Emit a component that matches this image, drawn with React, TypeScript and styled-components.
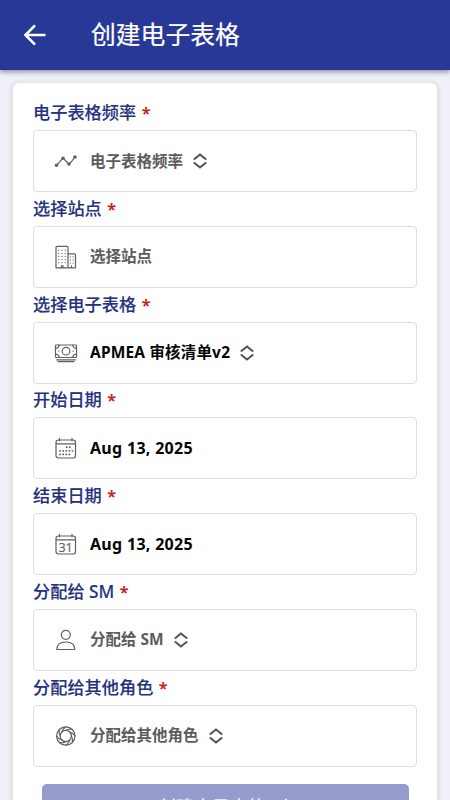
import React from "react";
import styled, { createGlobalStyle } from "styled-components";

const GlobalStyle = createGlobalStyle`
  * { box-sizing: border-box; }
  body {
    margin: 0;
    background: #f0f1f8;
    font-family: "Noto Sans", "Noto Sans CJK SC", sans-serif;
  }
`;

const Screen = styled.div`
  height: 800px;
  overflow: hidden;
`;

const Header = styled.header`
  position: relative;
  display: flex;
  align-items: center;
  height: 70px;
  padding-left: 22px;
  background: #273896;
  box-shadow: 0 2px 5px rgba(20, 20, 50, 0.45);
`;

const Title = styled.h1`
  margin: 0 0 4px 43px;
  color: #fff;
  font: 400 24.8px/36px "Noto Sans CJK SC", sans-serif;
  -webkit-text-stroke: 0.2px #fff;
`;

const Card = styled.main`
  height: 760px;
  margin: 12px 12px 0;
  padding: 13.2px 20px 0;
  background: #fff;
  border: 1px solid #e4e5ea;
  border-radius: 7px;
  box-shadow: 0 1px 5px rgba(40, 40, 70, 0.2);
`;

const Field = styled.section`
  height: 95.75px;
`;

const Label = styled.label`
  display: flex;
  align-items: center;
  height: 33.9px;
  color: #25317f;
  font-size: 17.2px;
  font-weight: 500;
  line-height: 26px;
  white-space: pre;
  -webkit-text-stroke: 0.12px currentColor;
`;

const Required = styled.span`
  margin-left: 5.5px;
  color: #d0161c;
  font-family: "Noto Sans", sans-serif;
  font-size: 16px;
  font-weight: 600;
`;

const Control = styled.div`
  display: flex;
  align-items: center;
  width: 384px;
  height: 62px;
  padding-left: 19px;
  border: 1px solid #d9dee8;
  border-radius: 4px;
`;

const Value = styled.span<{ $filled?: boolean; $tracking?: number }>`
  margin: 0 9px 1px 11px;
  color: ${(p) => (p.$filled ? "#050505" : "#5c5c5c")};
  font-size: ${(p) => (p.$tracking && p.$tracking > 0.2 ? 16 : 15.5)}px;
  font-weight: 700;
  line-height: 24px;
  letter-spacing: ${(p) => p.$tracking ?? 0}px;
  white-space: pre;
`;

const Submit = styled.button`
  display: flex;
  align-items: flex-start;
  justify-content: center;
  gap: 8px;
  width: 367px;
  height: 50px;
  margin: 17.8px 0 0 8.5px;
  padding: 9px 2px 0 0;
  border: 0;
  border-radius: 5px;
  background: #959bca;
  color: #eef0fb;
  font: 500 18px/27px "Noto Sans CJK SC", sans-serif;
`;

const Icon = styled.svg`
  display: block;
  flex: none;
  fill: none;
  stroke: #606060;
  stroke-width: 1.2;
  stroke-linecap: round;
  stroke-linejoin: round;
`;

const Small = ({ children }: { children: React.ReactNode }) => (
  <Icon width="26" height="26" viewBox="0 0 26 26">{children}</Icon>
);

const TrendIcon = () => (
  <Small>
    <g fill="#777">
      <path fill="none" d="M4.2 16.7 9 11.2M11 11l4.3 4.6M17 15.3 21.5 9.8" />
      <circle cx="3.5" cy="17.2" r="1.2" />
      <circle cx="10" cy="10.3" r="1.2" />
      <circle cx="16" cy="16" r="1.2" />
      <circle cx="22" cy="9" r="1.2" />
    </g>
  </Small>
);

const BuildingIcon = () => (
  <Small>
    <path d="M3 23.8V3.4q0-1 1-1h10q1 0 1 1v20.4zM15 9.8h6.5q1 0 1 1v13H15M8.5 23.8v-2.3M10 23.8v-2.3M18.5 23.8v-2" />
    <path strokeDasharray="0.1 3" d="M5.8 6.2v15M9 6.2v13M12.2 6.2v15M17.3 12.8v9M20.1 12.8v9" />
  </Small>
);

const MoneyIcon = () => (
  <Small>
    <rect x="2.5" y="5" width="21" height="12.5" rx="0.8" />
    <circle cx="13" cy="11.2" r="3.8" />
    <path d="M6.2 5q0 3-3.7 3.4M19.8 5q0 3 3.7 3.4M6.2 17.5q0-3-3.7-3.4M19.8 17.5q0-3 3.7-3.4M3.5 19.8h19M5 21.7h16" />
    <path strokeDasharray="0.1 14" d="M5.9 11.2h15" />
  </Small>
);

const CalendarFrame = () => (
  <path d="M5.5 5H20q2.5 0 2.5 2.5v13q0 2.5-2.5 2.5H5.5Q3 23 3 20.5v-13Q3 5 5.5 5M3 8.8h19.5M6.5 3.4v2.4M19 3.4v2.4" />
);

const CalendarDotsIcon = () => (
  <Small>
    <CalendarFrame />
    <path strokeWidth="1.8" strokeDasharray="0.1 3" d="M13.7 12.2h6M7 15.8h12.5M7 19.4h9.5" />
  </Small>
);

const DayText = styled.text`
  fill: #606060;
  stroke: #606060;
  stroke-width: 0.2;
  font: 400 12.5px "Open Sans", sans-serif;
`;

const CalendarDayIcon = () => (
  <Small>
    <CalendarFrame />
    <DayText x="12.6" y="20.6" textAnchor="middle">31</DayText>
  </Small>
);

const PersonIcon = () => (
  <Small>
    <circle cx="12.8" cy="7.8" r="4.5" />
    <path d="M3.8 22.5q0-7.5 9-7.5t9 7.5z" />
  </Small>
);

const ApertureIcon = () => (
  <Small>
    <circle cx="12.8" cy="13" r="9.2" />
    <circle cx="12.8" cy="13" r="5.6" />
    {[0, 45, 90, 135, 180, 225, 270, 315].map((a) => (
      <path key={a} d="M12.8 7.4Q16 5.8 19 6.4" transform={`rotate(${a} 12.8 13)`} />
    ))}
  </Small>
);

const SortIcon = styled(Icon)`
  stroke: #505050;
  stroke-width: 1.9;
  stroke-linecap: butt;
  stroke-linejoin: miter;
`;

const UpDown = () => (
  <SortIcon width="16" height="16" viewBox="0 0 16 16">
    <path d="M1.8 6.6 8 1.4l6.2 5.2M1.8 9.4 8 14.6l6.2-5.2" />
  </SortIcon>
);

interface FieldData {
  label: string;
  value: string;
  icon: React.ReactNode;
  filled?: boolean;
  select?: boolean;
  tracking?: number;
}

const fields: FieldData[] = [
  { label: "电子表格频率", value: "电子表格频率", icon: <TrendIcon />, select: true },
  { label: "选择站点", value: "选择站点", icon: <BuildingIcon /> },
  { label: "选择电子表格", value: "APMEA 审核清单v2", icon: <MoneyIcon />, filled: true, select: true, tracking: 0.17 },
  { label: "开始日期", value: "Aug 13, 2025", icon: <CalendarDotsIcon />, filled: true, tracking: 0.3 },
  { label: "结束日期", value: "Aug 13, 2025", icon: <CalendarDayIcon />, filled: true, tracking: 0.3 },
  { label: "分配给 SM", value: "分配给 SM", icon: <PersonIcon />, select: true },
  { label: "分配给其他角色", value: "分配给其他角色", icon: <ApertureIcon />, select: true },
];

export default function App() {
  return (
    <>
      <GlobalStyle />
      <Screen>
        <Header>
          <Icon width="26" height="26" viewBox="0 0 26 26">
            <path
              d="M23.5 13H4M13 3.3 3.4 13l9.6 9.7"
              stroke="#fff"
              strokeWidth="2.6"
              strokeLinecap="butt"
              strokeLinejoin="miter"
            />
          </Icon>
          <Title>创建电子表格</Title>
        </Header>
        <Card>
          {fields.map((f) => (
            <Field key={f.label}>
              <Label>
                {f.label}
                <Required>*</Required>
              </Label>
              <Control>
                {f.icon}
                <Value $filled={f.filled} $tracking={f.tracking}>{f.value}</Value>
                {f.select && <UpDown />}
              </Control>
            </Field>
          ))}
          <Submit>
            创建电子表格
            <Icon width="16" height="20" viewBox="0 0 16 20">
              <path d="M1 12 5 16 12 6.5" stroke="#eef0fb" strokeWidth="1.8" />
            </Icon>
          </Submit>
        </Card>
      </Screen>
    </>
  );
}
